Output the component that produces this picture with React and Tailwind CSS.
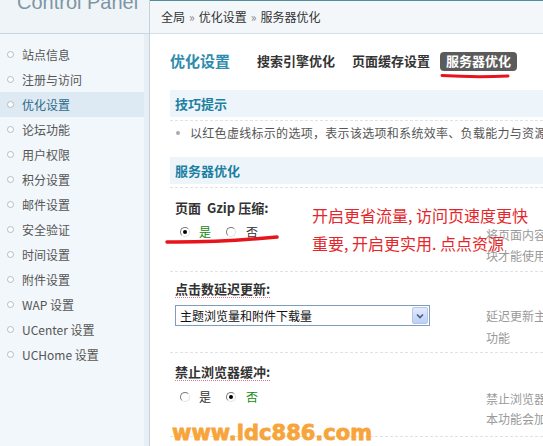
import React from 'react';

const menu = ['站点信息', '注册与访问', '优化设置', '论坛功能', '用户权限', '积分设置', '邮件设置', '安全验证', '时间设置', '附件设置', 'WAP 设置', 'UCenter 设置', 'UCHome 设置'];

function Radio({ checked }) {
    return (
        <span className="w-[10px] h-[10px] rounded-full border border-t-[#7a7a7a] border-l-[#7a7a7a] border-r-[#e2e2e2] border-b-[#e2e2e2] bg-white flex items-center justify-center shrink-0">
            {checked && <span className="w-[4px] h-[4px] rounded-full bg-black" />}
        </span>
    );
}

function RadioRow({ yes }) {
    return (
        <div className="h-[16px] flex items-center pl-[5px] text-[12px]">
            <Radio checked={yes} />
            <span className={`ml-[9px] ${yes ? 'text-[#118811]' : 'text-[#333]'}`}>是</span>
            <span className="ml-[15px]"><Radio checked={!yes} /></span>
            <span className={`ml-[10px] ${!yes ? 'text-[#118811]' : 'text-[#333]'}`}>否</span>
        </div>
    );
}

function SectionHead({ title }) {
    return (
        <div className="ml-[20px] pb-[3px] border-b border-dashed border-[#dde3e8]">
            <div className="h-[27px] bg-[#eef5fa] pl-[5px] flex items-center text-[13px] font-bold text-[#1d7fa2]">{title}</div>
        </div>
    );
}

export default function App() {
    return (
        <div className="w-[543px] h-[446px] overflow-hidden flex bg-white font-[family-name:'Noto_Sans_CJK_SC','Liberation_Sans',sans-serif]">
            {/* sidebar */}
            <div className="w-[150px] shrink-0 bg-[#f2f7fb] border-r border-[#c3d2dc] shadow-[inset_-5px_0_0_#e7eff5] flex flex-col">
                <div className="h-[34px] shrink-0 border-b border-[#c7d6e0] bg-[#eef4f8] overflow-hidden pl-[17px]">
                    <div className="-mt-[8px] leading-[20px] text-[20px] text-[#7f95a3] font-[family-name:'Liberation_Sans',sans-serif]">Control Panel</div>
                </div>
                <ul className="pt-[8px]">
                    {menu.map(item => (
                        <li
                            key={item}
                            className={`h-[25px] flex items-center pl-[7px] mr-[5px] text-[12px] ${item === '优化设置' ? 'bg-[#dde9f3] text-[#2d6a8a]' : 'text-[#555]'}`}
                        >
                            <span className="w-[7px] h-[7px] rounded-full border border-[#b3bcc2] bg-white shrink-0" />
                            <span className="ml-[8px]">{item}</span>
                        </li>
                    ))}
                </ul>
            </div>

            {/* main */}
            <div className="flex-1 min-w-0 flex flex-col relative">
                <div className="h-[34px] shrink-0 border-t border-[#4f8f9c] border-b border-b-[#d3dee6] bg-[#f3f7fa] pl-[11px] flex items-center text-[12px] text-[#333] whitespace-nowrap">
                    全局 <span className="mx-[4px] text-[#888]">»</span> 优化设置 <span className="mx-[4px] text-[#888]">»</span> 服务器优化
                </div>

                <div className="mt-[16px] h-[22px] pl-[20px] flex items-center whitespace-nowrap">
                    <span className="text-[15px] font-bold text-[#2f8cad]">优化设置</span>
                    <span className="ml-[21px] px-[6px] text-[13px] font-bold text-[#333]">搜索引擎优化</span>
                    <span className="ml-[5px] px-[6px] text-[13px] font-bold text-[#333]">页面缓存设置</span>
                    <span className="ml-[4px] h-[19px] px-[6px] rounded-[4px] bg-[#5b5b5b] flex items-center text-[13px] font-bold text-white">服务器优化</span>
                </div>

                <div className="mt-[18px]">
                    <SectionHead title="技巧提示" />
                </div>
                <div className="h-[24px] ml-[26px] flex items-center text-[12px] text-[#555] whitespace-nowrap">
                    <span className="w-[4px] h-[4px] rounded-full bg-[#aaa] shrink-0" />
                    <span className="ml-[10px] tracking-[0.3px]">以红色虚线标示的选项，表示该选项和系统效率、负载能力与资源消耗有关</span>
                </div>

                <div className="mt-[12px]">
                    <SectionHead title="服务器优化" />
                </div>

                <div className="ml-[20px] pl-[5px] mt-[10px] h-[20px] flex items-center text-[13px] font-bold text-[#333]">页面&nbsp;&nbsp;Gzip 压缩:</div>
                <div className="ml-[20px] pl-[5px] pt-[6px] pb-[5px] border-b border-dashed border-[#dde3e8] flex">
                    <div className="w-[311px] shrink-0"><RadioRow yes /></div>
                    <div className="text-[12px] leading-[21px] text-[#999] whitespace-nowrap">
                        <div>将页面内容以 gzip 压缩后传输，可以加快传输速度，需 Zlib 模</div>
                        <div>块才能使用</div>
                    </div>
                </div>

                <div className="ml-[20px] pl-[5px] mt-[9px] flex">
                    <span className="leading-[16px] text-[13px] font-bold text-[#333] border-b border-dotted border-[#e07a8a]">点击数延迟更新:</span>
                </div>
                <div className="ml-[20px] pl-[5px] mt-[7px] pb-[3px] border-b border-dashed border-[#dde3e8] flex">
                    <div className="w-[311px] shrink-0">
                        <div className="w-[255px] h-[21px] border border-[#7f9db9] bg-white flex items-center">
                            <span className="flex-1 pl-[4px] text-[12px] text-[#111] whitespace-nowrap">主题浏览量和附件下载量</span>
                            <span className="w-[16px] h-[17px] mr-[1px] rounded-[2px] border border-[#b3c6ef] bg-gradient-to-b from-[#e3ebfc] to-[#bccff6] flex items-center justify-center">
                                <svg width="8" height="6" viewBox="0 0 8 6"><path d="M1 1.5 L4 4.5 L7 1.5" fill="none" stroke="#4a5d84" strokeWidth="1.6" /></svg>
                            </span>
                        </div>
                    </div>
                    <div className="text-[12px] leading-[22px] text-[#999] whitespace-nowrap">
                        <div>延迟更新主题浏览量和附件下载量，可以减轻服务器负担</div>
                        <div>功能</div>
                    </div>
                </div>

                <div className="ml-[20px] pl-[5px] mt-[11px] flex">
                    <span className="leading-[16px] text-[13px] font-bold text-[#333] border-b border-dotted border-[#e07a8a]">禁止浏览器缓冲:</span>
                </div>
                <div className="ml-[20px] pl-[5px] mt-[8px] pb-[7px] border-b border-dashed border-[#dde3e8] flex">
                    <div className="w-[311px] shrink-0"><RadioRow yes={false} /></div>
                    <div className="text-[12px] leading-[20px] text-[#999] whitespace-nowrap">
                        <div>禁止浏览器对论坛页面进行缓冲</div>
                        <div>本功能会加重服务器负担</div>
                    </div>
                </div>

                {/* annotations */}
                <svg className="absolute left-[290px] top-[73px]" width="70" height="6" viewBox="0 0 70 6">
                    <path d="M2 2.5 Q 35 4.5 68 3" fill="none" stroke="#e8141c" strokeWidth="3" strokeLinecap="round" />
                </svg>
                <svg className="absolute left-[15px] top-[233px]" width="116" height="12" viewBox="0 0 116 12">
                    <path d="M2 9 Q 55 9.5 112 4" fill="none" stroke="#e8141c" strokeWidth="3.5" strokeLinecap="round" />
                </svg>
                <div className="absolute left-[162px] top-[201px] leading-[28px] text-[16px] text-[#e4262a] whitespace-nowrap">
                    <div>开启更省流量, 访问页速度更快</div>
                    <div>重要, 开启更实用. 点点资源</div>
                </div>
                <div className="absolute left-[22px] top-[421px] leading-[24px] text-[21px] font-bold text-[#f7a43a] [-webkit-text-stroke:0.8px_#f7a43a] font-[family-name:'DejaVu_Sans',sans-serif] whitespace-nowrap">
                    www.idc886.com
                </div>
            </div>
        </div>
    );
}
